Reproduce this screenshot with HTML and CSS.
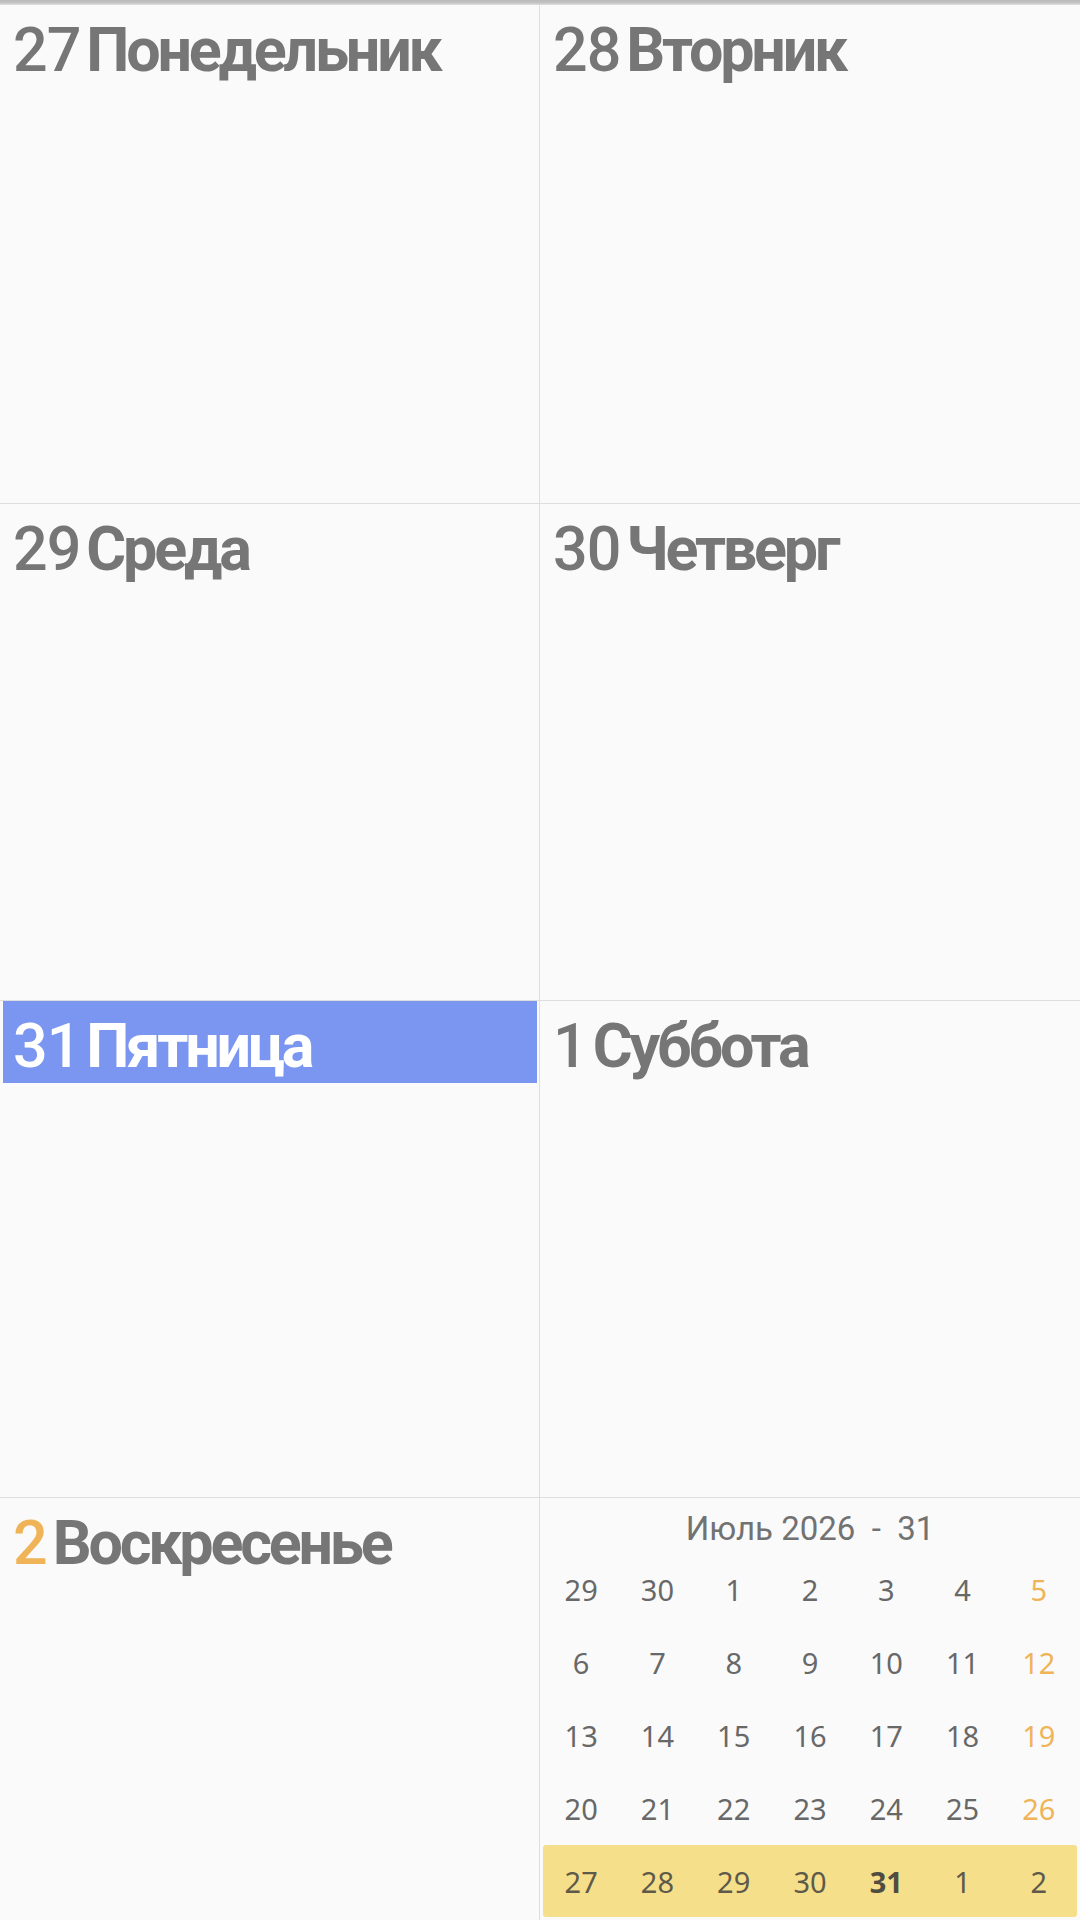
FILE: index.html
```html
<!DOCTYPE html>
<html lang="ru">
<head>
<meta charset="utf-8">
<title>Неделя</title>
<link rel="stylesheet" href="styles.css">
</head>
<body>
<div class="topbar"></div>
<div class="week">
  <div class="cell"><div class="head"><span class="num">27</span><span class="name">Понедельник</span></div></div>
  <div class="cell"><div class="head"><span class="num">28</span><span class="name">Вторник</span></div></div>
  <div class="cell"><div class="head"><span class="num">29</span><span class="name">Среда</span></div></div>
  <div class="cell"><div class="head"><span class="num">30</span><span class="name">Четверг</span></div></div>
  <div class="cell"><div class="head today"><span class="num">31</span><span class="name">Пятница</span></div></div>
  <div class="cell"><div class="head"><span class="num">1</span><span class="name">Суббота</span></div></div>
  <div class="cell"><div class="head"><span class="num sun">2</span><span class="name">Воскресенье</span></div></div>
  <div class="cell mini">
    <div class="mini-title">Июль 2026  -  31</div>
    <div class="mini-grid">
      <span>29</span><span>30</span><span>1</span><span>2</span><span>3</span><span>4</span><span class="sun">5</span>
      <span>6</span><span>7</span><span>8</span><span>9</span><span>10</span><span>11</span><span class="sun">12</span>
      <span>13</span><span>14</span><span>15</span><span>16</span><span>17</span><span>18</span><span class="sun">19</span>
      <span>20</span><span>21</span><span>22</span><span>23</span><span>24</span><span>25</span><span class="sun">26</span>
      <div class="cur-week">
        <span>27</span><span>28</span><span>29</span><span>30</span><span class="cur">31</span><span>1</span><span>2</span>
      </div>
    </div>
  </div>
</div>
</body>
</html>
```
FILE: styles.css
```css
html, body {
  margin: 0;
  padding: 0;
}
body {
  width: 1080px;
  height: 1920px;
  overflow: hidden;
  background: #fafafa;
  font-family: Roboto, "Noto Sans", sans-serif;
}
.topbar {
  height: 5px;
  background: linear-gradient(#b9b9b9, #c4c4c4 60%, #e2e2e2);
}
.week {
  display: grid;
  grid-template-columns: 539px 540px;
  grid-template-rows: 498px 496px 496px 422px;
  gap: 1px;
  background: #dedede;
}
.cell {
  background: #fafafa;
  overflow: hidden;
}
.head {
  margin: 0 2px 0 3px;
  padding: 9px 0 0 10px;
  height: 73px;
  line-height: 73px;
  font-size: 61px;
  color: #767676;
  white-space: nowrap;
}
.head.today {
  background: #7b96f0;
  color: #ffffff;
}
.num {
  font-weight: 500;
  margin-right: 6px;
  letter-spacing: -1px;
}
.name {
  font-weight: 700;
  letter-spacing: -3.2px;
}
.num.sun {
  color: #f0b458;
}
.mini {
  padding: 0 3px;
}
.mini-title {
  padding-top: 5px;
  height: 50px;
  line-height: 52px;
  text-align: center;
  font-size: 33px;
  color: #727272;
  white-space: pre;
}
.mini-grid {
  display: grid;
  grid-template-columns: repeat(7, 1fr);
  grid-auto-rows: 73px;
  font-family: "Noto Sans", sans-serif;
  font-size: 29px;
  color: #686868;
}
.mini-grid span {
  display: flex;
  align-items: center;
  justify-content: center;
}
.mini-grid .sun {
  color: #f0b458;
}
.cur-week {
  grid-column: 1 / -1;
  display: grid;
  grid-template-columns: repeat(7, 1fr);
  height: 72px;
  background: #f5df8b;
  border-radius: 3px;
  color: #5e5a4a;
}
.cur-week .cur {
  font-weight: 700;
  color: #4f4c42;
}
```
